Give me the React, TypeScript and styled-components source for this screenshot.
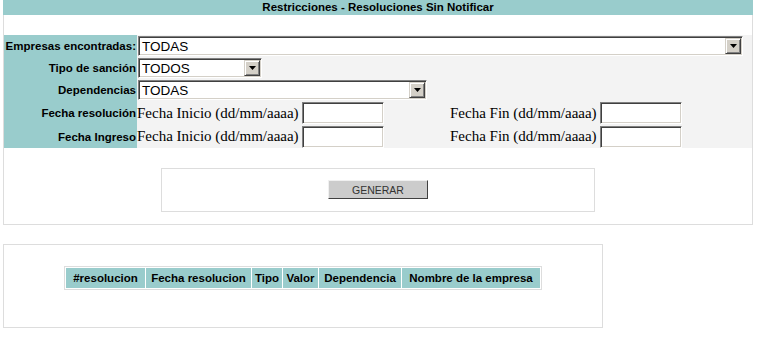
import * as React from 'react';
import styled, { createGlobalStyle } from 'styled-components';

const GlobalStyle = createGlobalStyle`
  body {
    margin: 0;
    background: #fff;
    color: #000;
    font-family: "Liberation Serif", "Times New Roman", serif;
    font-size: 15px;
  }
`;

const Page = styled.div`
  padding: 0 3px;
`;

const MainPanel = styled.div`
  width: 748px;
  border: 1px solid #dddddd;
  border-top: none;
`;

const TitleBar = styled.div`
  margin: 0 -1px;
  height: 15px;
  background: #99cccc;
  text-align: center;
  font: bold 11.5px/15px "Liberation Sans", Arial, sans-serif;
`;

const Gap = styled.div<{ $h: number }>`
  height: ${p => p.$h}px;
`;

const FormRows = styled.div`
  display: flex;
  flex-direction: column;
  background: #f3f3f3;
`;

const Row = styled.div<{ $h: number }>`
  display: grid;
  grid-template-columns: 133px 1fr;
  height: ${p => p.$h}px;
`;

const Label = styled.div`
  background: #99cccc;
  display: flex;
  align-items: center;
  justify-content: flex-end;
  padding-right: 1px;
  font: bold 11.5px "Liberation Sans", Arial, sans-serif;
  white-space: nowrap;
`;

const Field = styled.div<{ $indent?: number }>`
  display: flex;
  align-items: center;
  padding-left: ${p => p.$indent ?? 1}px;
`;

const SelectBox = styled.div<{ $w: number }>`
  box-sizing: border-box;
  width: ${p => p.$w}px;
  height: 20px;
  display: flex;
  align-items: center;
  background: #fff;
  border-style: solid;
  border-width: 1px;
  border-color: #808080 #ffffff #ffffff #808080;
  box-shadow: inset 1px 1px 0 #404040, inset -1px -1px 0 #d4d0c8;
  font: 13.5px "Liberation Sans", Arial, sans-serif;
  padding-left: 3px;
`;

const SelectText = styled.span`
  flex: 1;
`;

const ArrowButton = styled.span`
  box-sizing: border-box;
  width: 16px;
  height: 16px;
  margin-right: 1px;
  background: #d4d0c8;
  border-style: solid;
  border-width: 1px;
  border-color: #d4d0c8 #404040 #404040 #d4d0c8;
  box-shadow: inset 1px 1px 0 #ffffff, inset -1px -1px 0 #808080;
  display: flex;
  align-items: center;
  justify-content: center;
`;

const TextBox = styled.input`
  box-sizing: border-box;
  width: 82px;
  height: 22px;
  margin: 0;
  background: #fff;
  border-style: solid;
  border-width: 1px;
  border-color: #808080 #ffffff #ffffff #808080;
  box-shadow: inset 1px 1px 0 #404040, inset -1px -1px 0 #d4d0c8;
  outline: none;
`;

const DateGroup = styled.div<{ $w?: number }>`
  display: flex;
  align-items: center;
  gap: 3px;
  width: ${p => (p.$w ? `${p.$w}px` : 'auto')};
  white-space: nowrap;
`;

const ActionBox = styled.div`
  box-sizing: content-box;
  width: 432px;
  height: 31px;
  margin: 20px auto 12px;
  padding-top: 11px;
  border: 1px solid #dddddd;
  display: flex;
  align-items: flex-start;
  justify-content: center;
`;

const GenerateButton = styled.button`
  box-sizing: border-box;
  width: 100px;
  height: 19px;
  padding: 0;
  background: #cccccc;
  border-style: solid;
  border-width: 1px;
  border-color: #f0f0f0 #404040 #404040 #f0f0f0;
  color: #333;
  font: 10.5px "Liberation Sans", Arial, sans-serif;
`;

const ResultPanel = styled.div`
  box-sizing: border-box;
  width: 600px;
  height: 84px;
  margin-top: 19px;
  padding: 21px 0 0 60px;
  border: 1px solid #dddddd;
`;

const ResultTable = styled.table`
  border: 1px solid #dddddd;
  border-spacing: 1px;
  background: #fff;
`;

const HeadCell = styled.th<{ $w: number }>`
  width: ${p => p.$w}px;
  height: 20px;
  padding: 0;
  background: #99cccc;
  font: bold 11.5px "Liberation Sans", Arial, sans-serif;
  text-align: center;
  white-space: nowrap;
`;

const Arrow = () => (
  <svg width="7" height="4" viewBox="0 0 7 4">
    <path d="M0 0h7L3.5 4z" fill="#000" />
  </svg>
);

const Select = ({ value, width }: { value: string; width: number }) => (
  <SelectBox $w={width}>
    <SelectText>{value}</SelectText>
    <ArrowButton>
      <Arrow />
    </ArrowButton>
  </SelectBox>
);

const DateRange = () => (
  <Field $indent={0}>
    <DateGroup $w={313}>
      Fecha Inicio (dd/mm/aaaa)
      <TextBox type="text" />
    </DateGroup>
    <DateGroup>
      Fecha Fin (dd/mm/aaaa)
      <TextBox type="text" />
    </DateGroup>
  </Field>
);

const columns: [string, number][] = [
  ['#resolucion', 79],
  ['Fecha resolucion', 105],
  ['Tipo', 30],
  ['Valor', 35],
  ['Dependencia', 82],
  ['Nombre de la empresa', 138],
];

export default function App() {
  return (
    <Page>
      <GlobalStyle />
      <MainPanel>
        <TitleBar>Restricciones - Resoluciones Sin Notificar</TitleBar>
        <Gap $h={20} />
        <FormRows>
          <Row $h={22}>
            <Label>Empresas encontradas:</Label>
            <Field>
              <Select value="TODAS" width={605} />
            </Field>
          </Row>
          <Row $h={22}>
            <Label>Tipo de sanción</Label>
            <Field>
              <Select value="TODOS" width={124} />
            </Field>
          </Row>
          <Row $h={22}>
            <Label>Dependencias</Label>
            <Field>
              <Select value="TODAS" width={289} />
            </Field>
          </Row>
          <Row $h={24}>
            <Label>Fecha resolución</Label>
            <DateRange />
          </Row>
          <Row $h={23}>
            <Label>Fecha Ingreso</Label>
            <DateRange />
          </Row>
        </FormRows>
        <ActionBox>
          <GenerateButton type="button">GENERAR</GenerateButton>
        </ActionBox>
      </MainPanel>
      <ResultPanel>
        <ResultTable>
          <thead>
            <tr>
              {columns.map(([title, w]) => (
                <HeadCell key={title} $w={w}>
                  {title}
                </HeadCell>
              ))}
            </tr>
          </thead>
        </ResultTable>
      </ResultPanel>
    </Page>
  );
}
